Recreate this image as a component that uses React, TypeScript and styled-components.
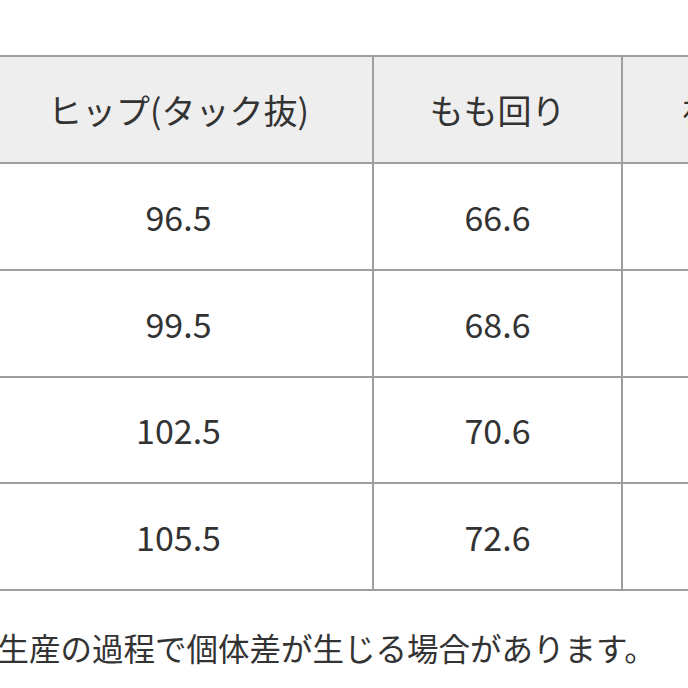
import React from "react";
import styled, { createGlobalStyle } from "styled-components";

const GlobalStyle = createGlobalStyle`
  html, body {
    margin: 0;
    padding: 0;
    background: #ffffff;
  }
  body {
    font-family: "Noto Sans CJK JP", "Noto Sans", sans-serif;
    color: #333333;
  }
`;

const Viewport = styled.div`
  width: 688px;
  height: 688px;
  overflow: hidden;
  background: #ffffff;
  padding-top: 55px;
  box-sizing: border-box;
`;

const SizeTable = styled.table`
  border-collapse: collapse;
  table-layout: fixed;
  margin-left: -17px;
  width: 823px;
`;

const HeadCell = styled.th<{ $w: number }>`
  width: ${(p) => p.$w}px;
  height: 105px;
  padding: 0;
  background: #eeeeee;
  border: 2px solid #9e9e9e;
  font-family: "Noto Sans CJK JP", sans-serif;
  font-weight: 400;
  font-size: 34px;
  color: #333333;
  text-align: center;
  vertical-align: middle;
  white-space: nowrap;
  overflow: hidden;
`;

const DataCell = styled.td`
  height: 104.75px;
  padding: 0;
  border: 2px solid #9e9e9e;
  font-family: "Noto Sans CJK JP", sans-serif;
  font-size: 34px;
  color: #333333;
  text-align: center;
  vertical-align: middle;
  white-space: nowrap;
  overflow: hidden;
`;

const Note = styled.p`
  margin: 36px 0 0 -34px;
  font-family: "Noto Sans CJK JP", sans-serif;
  font-size: 31.5px;
  line-height: 40px;
  color: #333333;
  white-space: nowrap;
`;

const rows = [
  ["96.5", "66.6"],
  ["99.5", "68.6"],
  ["102.5", "70.6"],
  ["105.5", "72.6"],
];

export default function App() {
  return (
    <>
      <GlobalStyle />
      <Viewport>
        <SizeTable>
          <thead>
            <tr>
              <HeadCell $w={387}>ヒップ(タック抜)</HeadCell>
              <HeadCell $w={247}>もも回り</HeadCell>
              <HeadCell $w={187}>裄丈</HeadCell>
            </tr>
          </thead>
          <tbody>
            {rows.map((r, i) => (
              <tr key={i}>
                <DataCell>{r[0]}</DataCell>
                <DataCell>{r[1]}</DataCell>
                <DataCell></DataCell>
              </tr>
            ))}
          </tbody>
        </SizeTable>
        <Note>※生産の過程で個体差が生じる場合があります。</Note>
      </Viewport>
    </>
  );
}
